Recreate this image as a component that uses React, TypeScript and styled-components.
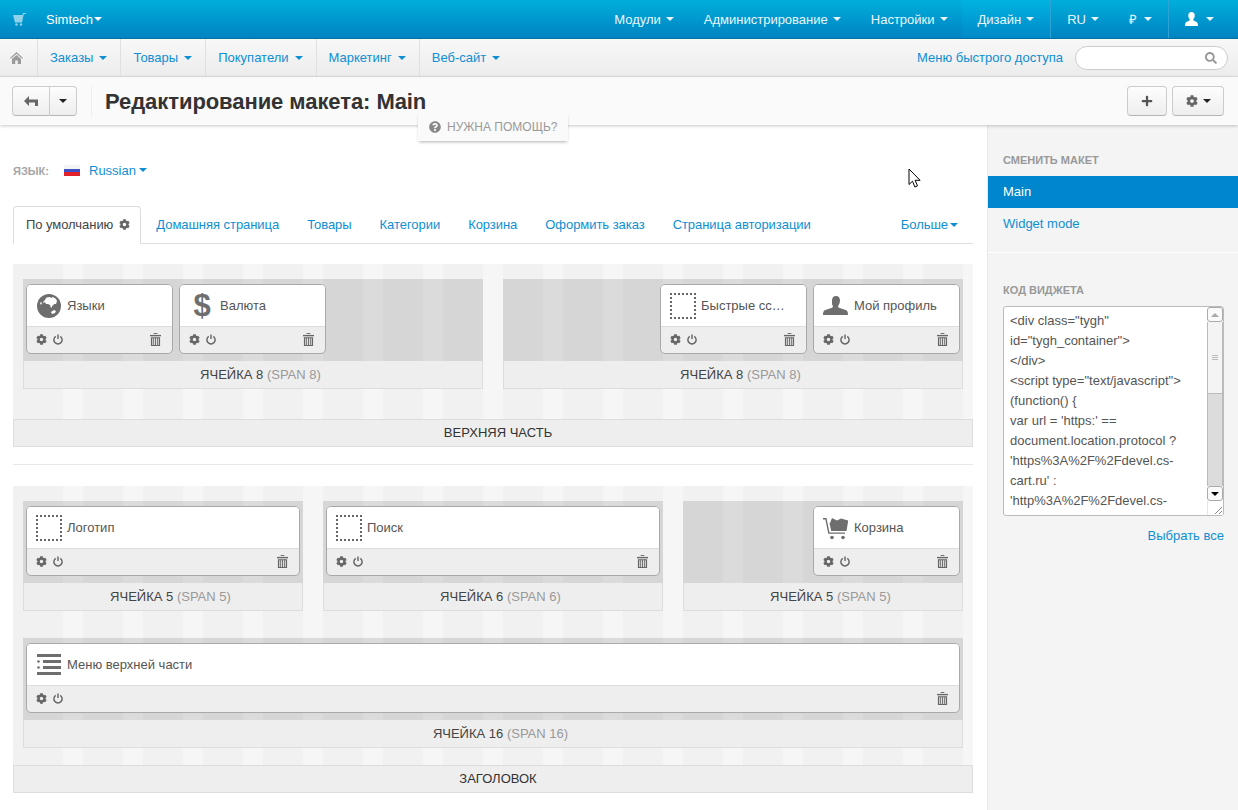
import React from 'react'
import styled, { createGlobalStyle } from 'styled-components'
import { FaCog, FaSearch, FaPlus, FaQuestionCircle } from 'react-icons/fa'

const GlobalStyle = createGlobalStyle`
    html, body {
        margin: 0;
        padding: 0;
        height: 810px;
        overflow: hidden;
        background: #fff;
        font-family: "Liberation Sans", Arial, sans-serif;
        font-size: 13px;
        color: #333;
    }
    * { box-sizing: border-box; }
`

const Caret = styled.i<{ $color?: string }>`
    display: inline-block;
    width: 0;
    height: 0;
    border-left: 4px solid transparent;
    border-right: 4px solid transparent;
    border-top: 4px solid ${(p) => p.$color || 'currentColor'};
`

// top bar
const TopBar = styled.div`
    display: flex;
    align-items: stretch;
    height: 39px;
    padding-right: 8px;
    background: linear-gradient(to bottom, #00aedb, #0083c2);
    border-bottom: 1px solid #00709f;
    color: #fff;
`

const Brand = styled.div`
    display: flex;
    align-items: center;
    padding-left: 13px;
    margin-right: auto;
    svg { margin-right: 20px; }
`

const BrandCaret = styled(Caret)`
    margin-left: 1px;
`

const TopItem = styled.div<{ $active?: boolean; $sep?: boolean; $end?: number }>`
    display: flex;
    align-items: center;
    gap: 5px;
    padding: 0 ${(p) => p.$end ?? 14}px 0 16px;
    background: ${(p) => (p.$active ? 'linear-gradient(to bottom, #00b3e0, #0089c9)' : 'none')};
    border-left: ${(p) => (p.$sep ? '1px solid #2ea3d5' : '0')};
    color: #e8f6fb;
`

const UserItem = styled(TopItem)`
    gap: 8px;
    svg { color: #fff; }
`

const Rouble = styled.span`
    margin-right: 2px;
`

// second bar
const SubBar = styled.div`
    display: flex;
    align-items: stretch;
    height: 38px;
    background: linear-gradient(to bottom, #f8f8f8, #ececec);
    border-bottom: 1px solid #ddd;
`

const HomeCell = styled.div`
    display: flex;
    align-items: center;
    width: 37px;
    padding-left: 10px;
`

const SubItem = styled.div`
    display: flex;
    align-items: center;
    gap: 6px;
    padding: 0 13px 0 12px;
    border-left: 1px solid #e0e0e0;
    color: #0e8fd3;
`

const SubRight = styled.div`
    display: flex;
    align-items: center;
    margin-left: auto;
    padding-right: 10px;
    color: #0e8fd3;
`

const SearchBox = styled.div`
    display: flex;
    align-items: center;
    justify-content: flex-end;
    width: 153px;
    height: 24px;
    margin-left: 12px;
    padding-right: 10px;
    background: #fff;
    border: 1px solid #ccc;
    border-radius: 12px;
    color: #999;
    svg { width: 12px; height: 12px; }
`

// action bar
const ActionBar = styled.div`
    position: relative;
    z-index: 2;
    display: flex;
    align-items: center;
    height: 48px;
    padding: 0 14px 1px 12px;
    background: #fafafa;
    box-shadow: 0 1px 3px rgba(0, 0, 0, 0.22);
`

const Btn = styled.div<{ $w: number }>`
    display: flex;
    align-items: center;
    justify-content: center;
    gap: 5px;
    width: ${(p) => p.$w}px;
    height: 30px;
    background: linear-gradient(to bottom, #fdfdfd, #eeeeee);
    border: 1px solid #ccc;
    border-bottom-color: #b5b5b5;
    border-radius: 4px;
    color: #555;
`

const BackBtn = styled(Btn)`
    border-radius: 4px 0 0 4px;
`

const MoreBtn = styled(Btn)`
    border-left: 0;
    border-radius: 0 4px 4px 0;
    color: #222;
`

const TitleWrap = styled.div`
    display: flex;
    align-items: center;
    height: 30px;
    margin-left: 14px;
    padding-left: 13px;
    border-left: 1px solid #eee;
    margin-right: auto;
`

const Title = styled.h1`
    margin: 0;
    padding-top: 2px;
    font-size: 22px;
    line-height: 30px;
    font-weight: 700;
    letter-spacing: -0.07px;
    color: #333;
`

const GearBtn = styled(Btn)`
    margin-left: 5px;
    svg { width: 12px; height: 12px; }
    color: #666;
`

const PlusBtn = styled(Btn)`
    svg { width: 12px; height: 12px; }
`

const HelpTab = styled.div`
    position: absolute;
    left: 418px;
    top: 35px;
    display: flex;
    align-items: center;
    gap: 6px;
    width: 150px;
    height: 29px;
    padding-left: 11px;
    background: #fafafa;
    box-shadow: 0 2px 3px -1px rgba(0, 0, 0, 0.3);
    font-size: 12px;
    color: #999;
    svg { width: 12px; height: 12px; color: #888; }
`

// page
const Page = styled.div`
    display: grid;
    grid-template-columns: 987px 251px;
    height: 685px;
`

const Main = styled.div`
    position: relative;
    padding: 35px 14px 0 13px;
`

const LangRow = styled.div`
    display: flex;
    align-items: center;
    height: 20px;
    color: #0e8fd3;
`

const LangLabel = styled.span`
    width: 51px;
    padding-top: 2px;
    font-size: 11px;
    font-weight: 700;
    color: #a5a5a5;
`

const Flag = styled.i`
    width: 16px;
    height: 11px;
    margin-right: 9px;
    background: linear-gradient(to bottom, #f4f4f4 0 33%, #3d4fc4 33% 66%, #e0202a 66% 100%);
`

const LangCaret = styled(Caret)`
    margin-left: 3px;
`

const Tabs = styled.div`
    display: flex;
    align-items: stretch;
    height: 38px;
    margin-top: 26px;
    border-bottom: 1px solid #ddd;
    letter-spacing: -0.05px;
`

const Tab = styled.div<{ $active?: boolean }>`
    display: flex;
    align-items: center;
    gap: 6px;
    height: ${(p) => (p.$active ? '38px' : '37px')};
    margin-right: 2px;
    padding: 0 ${(p) => (p.$active ? '10px' : '12px')} ${(p) => (p.$active ? '1px' : '0')} 12px;
    background: ${(p) => (p.$active ? '#fff' : 'none')};
    border: 1px solid ${(p) => (p.$active ? '#ddd' : 'transparent')};
    border-bottom-color: ${(p) => (p.$active ? '#fff' : 'transparent')};
    border-radius: 4px 4px 0 0;
    color: ${(p) => (p.$active ? '#444' : '#0e8fd3')};
    svg { width: 11px; height: 11px; color: #666; }
`

const TabMore = styled(Tab)`
    margin-left: auto;
    margin-right: 0;
    padding-right: 14px;
    gap: 2px;
`

const Container = styled.div<{ $top: number }>`
    margin-top: ${(p) => p.$top}px;
    padding-top: 15px;
    background:
        linear-gradient(90deg, #f1f1f1 10px, transparent 10px),
        linear-gradient(90deg, #f1f1f1 40px, #f6f6f6 40px) 10px 0 / 60px 100%;
`

const Row = styled.div<{ $after: number }>`
    display: grid;
    grid-template-columns: repeat(16, 40px);
    column-gap: 20px;
    padding: 0 10px;
    margin-bottom: ${(p) => p.$after}px;
`

const CellWrap = styled.div<{ $span: number }>`
    grid-column: span ${(p) => p.$span};
`

const CellBody = styled.div<{ $end?: boolean }>`
    display: flex;
    justify-content: ${(p) => (p.$end ? 'flex-end' : 'flex-start')};
    gap: 6px;
    height: 82px;
    padding: 5px 3px 7px;
    background: rgba(0, 0, 0, 0.11);
`

const CellFoot = styled.div`
    height: 28px;
    line-height: 27px;
    padding-left: 15px;
    text-align: center;
    background: #eee;
    border: 1px solid #ddd;
    border-top: 0;
    color: #444;
    span { color: #999; }
`

const ContainerFoot = styled.div`
    height: 28px;
    line-height: 26px;
    padding-left: 10px;
    text-align: center;
    background: #eee;
    border: 1px solid #ddd;
    color: #333;
`

const Divider = styled.div`
    height: 1px;
    margin-top: 17px;
    background: #e8e8e8;
`

const Card = styled.div<{ $wide?: boolean }>`
    flex: ${(p) => (p.$wide ? '1' : '0 0 147px')};
    display: flex;
    flex-direction: column;
    height: 70px;
    background: #eee;
    border: 1px solid #a9a9a9;
    border-radius: 5px;
    overflow: hidden;
`

const CardHead = styled.div`
    display: flex;
    align-items: center;
    gap: 5px;
    height: 42px;
    padding-left: 9px;
    background: #fff;
    border-bottom: 1px solid #ddd;
    color: #555;
    white-space: nowrap;
`

const CardIcon = styled.div`
    display: flex;
    align-items: center;
    justify-content: center;
    flex: 0 0 26px;
    height: 26px;
    color: #6e6e6e;
`

const Dotted = styled.div`
    width: 26px;
    height: 26px;
    border: 2px dotted #666;
`

const DollarGlyph = styled.span`
    font-size: 31px;
    line-height: 26px;
    font-weight: 700;
    color: #6e6e6e;
`

const CardFoot = styled.div`
    display: flex;
    align-items: center;
    gap: 6px;
    flex: 1;
    padding: 0 11px 1px 9px;
    color: #666;
`

const Trash = styled.svg`
    margin-left: auto;
`

// sidebar
const Side = styled.aside`
    padding-top: 29px;
    background: #f4f4f4;
    border-left: 1px solid #e9e9e9;
`

const SideHead = styled.div`
    padding-left: 15px;
    height: 13px;
    line-height: 13px;
    font-size: 11px;
    font-weight: 700;
    color: #999;
`

const SideItem = styled.div<{ $active?: boolean }>`
    height: 32px;
    line-height: 32px;
    padding-left: 15px;
    background: ${(p) => (p.$active ? '#0086cc' : 'none')};
    color: ${(p) => (p.$active ? '#fff' : '#0e8fd3')};
`

const SideMenu = styled.div`
    margin-top: 9px;
    padding-bottom: 12px;
    border-bottom: 1px solid #fff;
    margin-bottom: 31px;
`

const CodeBox = styled.div`
    display: flex;
    width: 221px;
    height: 210px;
    margin: 9px 0 0 15px;
    background: #fff;
    border: 1px solid #bbb;
    border-radius: 3px;
    overflow: hidden;
`

const CodeText = styled.div`
    flex: 1;
    padding: 4px 0 0 6px;
    line-height: 20px;
    color: #555;
    white-space: nowrap;
`

const ScrollCol = styled.div`
    display: flex;
    flex-direction: column;
    flex: 0 0 16px;
`

const ScrollBtn = styled.div<{ $down?: boolean }>`
    display: flex;
    align-items: center;
    justify-content: center;
    height: 15px;
    background: #fafafa;
    border: 1px solid #aaa;
    border-radius: 3px;
    &::after {
        content: '';
        border-left: 4px solid transparent;
        border-right: 4px solid transparent;
        ${(p) => (p.$down ? 'border-top: 4px solid #000;' : 'border-bottom: 4px solid #aaa;')}
    }
`

const ScrollThumb = styled.div`
    display: flex;
    flex-direction: column;
    align-items: center;
    justify-content: center;
    gap: 1px;
    height: 72px;
    background: #f4f4f4;
    border: 1px solid #bbb;
    border-top: 0;
    i { width: 6px; height: 1px; background: #bbb; }
`

const ScrollTrack = styled.div`
    height: 92px;
    background: #dcdcdc;
    border-left: 1px solid #bbb;
    border-right: 1px solid #bbb;
`

const Grip = styled.div`
    flex: 1;
    display: flex;
    align-items: flex-end;
    justify-content: flex-end;
    background: #fff;
    border-left: 1px solid #e4e4e4;
`

const SelectAll = styled.div`
    margin-top: 12px;
    padding-right: 14px;
    text-align: right;
    color: #0e8fd3;
`

const Pointer = styled.svg`
    position: absolute;
    left: 908px;
    top: 43px;
    z-index: 5;
`

const TrashIcon = () => (
    <Trash width="11" height="13" viewBox="0 0 12 14" fill="#666">
        <rect x="4" y="0" width="4" height="1" />
        <rect x="0" y="2" width="12" height="1.5" />
        <path d="M1 4.500h10V14H1zM2.500 5.500v7.500h1V5.500zM4.500 5.500v7.500h1V5.500zM6.500 5.500v7.500h1V5.500zM8.500 5.500v7.500h1V5.500z" fillRule="evenodd" />
    </Trash>
)

const PowerIcon = () => (
    <svg width="10" height="11" viewBox="0 0 11 12" fill="none" stroke="#666" strokeWidth="1.6">
        <path d="M3 2.600a4.500 4.500 0 1 0 5 0" />
        <path d="M5.500 0.500v5" />
    </svg>
)

const BustIcon = () => (
    <svg width="26" height="19" viewBox="0 0 26 19" fill="currentColor">
        <path d="M13 0c2.600 0 4 1.900 4 4.600 0 2-.8 4-1.800 5.200-.2 1.200.2 1.800 1.500 2.300l6 2c1.500.6 2.300 1.700 2.300 4.900H0c0-3.200.8-4.300 2.300-4.900l6-2c1.300-.5 1.700-1.100 1.500-2.300C8.800 8.600 9 6.600 9 4.600 9 1.900 10.400 0 13 0z" />
    </svg>
)

const UserIcon = () => (
    <svg width="13" height="14" viewBox="5 0 16 19" fill="currentColor" preserveAspectRatio="none">
        <path d="M13 0c2.600 0 4 1.900 4 4.600 0 2-.8 4-1.800 5.200-.2 1.200.2 1.800 1.500 2.300l2 1c1.500.6 2.300 1.700 2.300 5.900H5c0-4.200.8-5.300 2.300-5.900l2-1c1.300-.5 1.700-1.100 1.500-2.300C9.800 8.600 9 6.600 9 4.600 9 1.900 10.400 0 13 0z" />
    </svg>
)

const GlobeIcon = () => (
    <svg width="24" height="24" viewBox="0 0 24 24">
        <circle cx="12" cy="12" r="12" fill="currentColor" />
        <path
            fill="#fff"
            d="M9 4c1-1 3-1 4-1l1 1 2-1 3 2 1 2-1 3h-2l-1 2-1-1v2l-1 1-1-3-2-1H9L8 8 7 9 6 8l2-2zM14 18l3-2 2 1-1 2-3 1zM3 9l1-1 1 1-1 2z"
        />
    </svg>
)

const ListIcon = () => (
    <svg width="24" height="22" viewBox="0 0 24 22" fill="currentColor">
        <rect x="0" y="0" width="24" height="3" />
        <rect x="6" y="6" width="18" height="3" />
        <rect x="6" y="12" width="18" height="3" />
        <rect x="0" y="18" width="24" height="3" />
        <circle cx="1.500" cy="7.500" r="1.300" />
        <circle cx="1.500" cy="13.500" r="1.300" />
        <circle cx="1.500" cy="19.500" r="1.300" />
    </svg>
)

const CartIcon = () => (
    <svg width="26" height="24" viewBox="0 0 26 24" fill="currentColor">
        <path d="M0 2h3.500l3 14.500H22v1.300H5.300L2.400 3.500H0z" />
        <path d="M7 7l2-5 5 2.500 4-2 7 2v1.500H25l-1.500 9H8.200L6.500 7z" />
        <circle cx="9" cy="21.500" r="1.800" />
        <circle cx="20" cy="21.500" r="1.800" />
    </svg>
)

const LogoCart = () => (
    <svg width="13" height="13" viewBox="0 0 13 13" fill="#8fd2ea">
        <path d="M0 2h9.500l.5-2h3v1h-2.200L9 9.500H2z" />
        <circle cx="3.500" cy="11.500" r="1.200" />
        <circle cx="8" cy="11.500" r="1.200" />
    </svg>
)

const HomeIcon = () => (
    <svg width="13" height="12" viewBox="0 0 13 12" fill="#9a9a9a">
        <path d="M6.500 0L13 6l-.8.8-5.700-5-5.700 5L0 6z" />
        <path d="M2 7l4.500-4L11 7v5H7.800V8.500H5.200V12H2z" />
    </svg>
)

type BlockProps = { icon: React.ReactNode; label: string; wide?: boolean }

const Block = ({ icon, label, wide }: BlockProps) => (
    <Card $wide={wide}>
        <CardHead>
            <CardIcon>{icon}</CardIcon>
            {label}
        </CardHead>
        <CardFoot>
            <FaCog size={11} />
            <PowerIcon />
            <TrashIcon />
        </CardFoot>
    </Card>
)

const Cell = ({ span, end, children }: { span: number; end?: boolean; children: React.ReactNode }) => (
    <CellWrap $span={span}>
        <CellBody $end={end}>{children}</CellBody>
        <CellFoot>
            ЯЧЕЙКА {span} <span>(SPAN {span})</span>
        </CellFoot>
    </CellWrap>
)

const codeLines = [
    '<div class="tygh"',
    'id="tygh_container">',
    '</div>',
    '<script type="text/javascript">',
    '(function() {',
    "var url = 'https:' ==",
    'document.location.protocol ?',
    "'https%3A%2F%2Fdevel.cs-",
    "cart.ru' :",
    "'http%3A%2F%2Fdevel.cs-",
]

const App = () => (
    <>
        <GlobalStyle />
        <TopBar>
            <Brand>
                <LogoCart />
                Simtech
                <BrandCaret />
            </Brand>
            <TopItem>Модули <Caret /></TopItem>
            <TopItem>Администрирование <Caret /></TopItem>
            <TopItem>Настройки <Caret /></TopItem>
            <TopItem $active $end={16}>Дизайн <Caret /></TopItem>
            <TopItem $sep>RU <Caret /></TopItem>
            <TopItem $end={16}><Rouble>₽</Rouble> <Caret /></TopItem>
            <UserItem $sep $end={16}><UserIcon /> <Caret /></UserItem>
        </TopBar>

        <SubBar>
            <HomeCell><HomeIcon /></HomeCell>
            <SubItem>Заказы <Caret /></SubItem>
            <SubItem>Товары <Caret /></SubItem>
            <SubItem>Покупатели <Caret /></SubItem>
            <SubItem>Маркетинг <Caret /></SubItem>
            <SubItem>Веб-сайт <Caret /></SubItem>
            <SubRight>
                Меню быстрого доступа
                <SearchBox><FaSearch /></SearchBox>
            </SubRight>
        </SubBar>

        <ActionBar>
            <BackBtn $w={38}>
                <svg width="14" height="10" viewBox="0 0 14 10" fill="#666">
                    <path d="M0 5l5-5v3.500h9V10h-3V6.500H5V10z" />
                </svg>
            </BackBtn>
            <MoreBtn $w={27}><Caret /></MoreBtn>
            <TitleWrap><Title>Редактирование макета: Main</Title></TitleWrap>
            <PlusBtn $w={40}><FaPlus /></PlusBtn>
            <GearBtn $w={52}><FaCog /><Caret $color="#222" /></GearBtn>
            <HelpTab><FaQuestionCircle />НУЖНА ПОМОЩЬ?</HelpTab>
        </ActionBar>

        <Page>
            <Main>
                <Pointer width="14" height="21" viewBox="0 0 14 21">
                    <path d="M1 1v15.500l3.500-3.300 2.400 5.800 2.600-1.100-2.400-5.600h5z" fill="#fff" stroke="#000" strokeWidth="1" />
                </Pointer>
                <LangRow>
                    <LangLabel>ЯЗЫК:</LangLabel>
                    <Flag />
                    Russian
                    <LangCaret />
                </LangRow>

                <Tabs>
                    <Tab $active>По умолчанию <FaCog /></Tab>
                    <Tab>Домашняя страница</Tab>
                    <Tab>Товары</Tab>
                    <Tab>Категории</Tab>
                    <Tab>Корзина</Tab>
                    <Tab>Оформить заказ</Tab>
                    <Tab>Страница авторизации</Tab>
                    <TabMore>Больше <Caret /></TabMore>
                </Tabs>

                <Container $top={20}>
                    <Row $after={30}>
                        <Cell span={8}>
                            <Block icon={<GlobeIcon />} label="Языки" />
                            <Block icon={<DollarGlyph>$</DollarGlyph>} label="Валюта" />
                        </Cell>
                        <Cell span={8} end>
                            <Block icon={<Dotted />} label="Быстрые сс…" />
                            <Block icon={<BustIcon />} label="Мой профиль" />
                        </Cell>
                    </Row>
                    <ContainerFoot>ВЕРХНЯЯ ЧАСТЬ</ContainerFoot>
                </Container>

                <Divider />

                <Container $top={21}>
                    <Row $after={27}>
                        <Cell span={5}>
                            <Block icon={<Dotted />} label="Логотип" wide />
                        </Cell>
                        <Cell span={6}>
                            <Block icon={<Dotted />} label="Поиск" wide />
                        </Cell>
                        <Cell span={5} end>
                            <Block icon={<CartIcon />} label="Корзина" />
                        </Cell>
                    </Row>
                    <Row $after={17}>
                        <Cell span={16}>
                            <Block icon={<ListIcon />} label="Меню верхней части" wide />
                        </Cell>
                    </Row>
                    <ContainerFoot>ЗАГОЛОВОК</ContainerFoot>
                </Container>
            </Main>

            <Side>
                <SideHead>СМЕНИТЬ МАКЕТ</SideHead>
                <SideMenu>
                    <SideItem $active>Main</SideItem>
                    <SideItem>Widget mode</SideItem>
                </SideMenu>
                <SideHead>КОД ВИДЖЕТА</SideHead>
                <CodeBox>
                    <CodeText>
                        {codeLines.map((line) => (
                            <div key={line}>{line}</div>
                        ))}
                    </CodeText>
                    <ScrollCol>
                        <ScrollBtn />
                        <ScrollThumb><i /><i /><i /></ScrollThumb>
                        <ScrollTrack />
                        <ScrollBtn $down />
                        <Grip>
                            <svg width="9" height="9" viewBox="0 0 9 9" stroke="#888" fill="none">
                                <path d="M1 8l7-7M5 8l3-3" />
                            </svg>
                        </Grip>
                    </ScrollCol>
                </CodeBox>
                <SelectAll>Выбрать все</SelectAll>
            </Side>
        </Page>
    </>
)

export default App
